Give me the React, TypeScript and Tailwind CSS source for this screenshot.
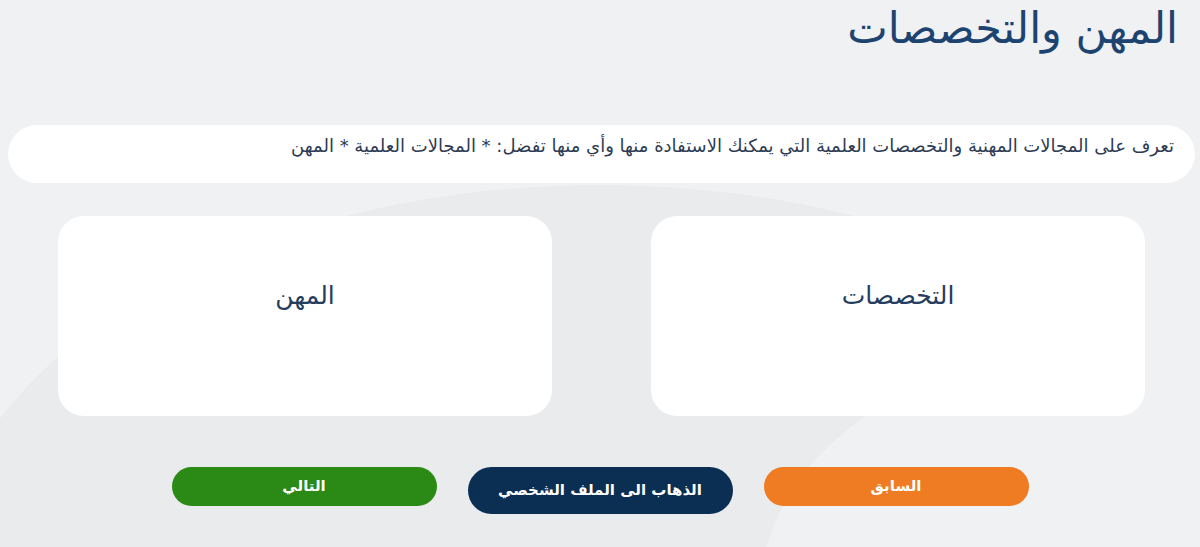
const arabic = "font-['DejaVu_Sans',sans-serif]";

export default function App() {
  return (
    <div
      dir="rtl"
      className={`relative h-[547px] w-[1200px] overflow-hidden bg-[#f0f1f2] ${arabic}`}
    >
      {/* soft background shapes */}
      <div className="pointer-events-none absolute -left-[60px] top-[185px] h-[800px] w-[1320px] rounded-[50%] bg-[#eaebed]" />
      <div className="pointer-events-none absolute left-[760px] top-[345px] h-[500px] w-[700px] rounded-[50%] bg-[#f0f1f2]" />

      <div className="relative flex flex-col">
        <h1 className="pr-[22px] pt-[2px] text-[43px] font-normal leading-[52px] text-[#1d4470]">
          المهن والتخصصات
        </h1>

        <div className="ml-[8px] mr-[5px] mt-[71px] h-[58px] rounded-[29px] bg-white pr-[21px] pt-[8px]">
          <p className="text-[18px] leading-[26px] text-[#2d3b55]">
            تعرف على المجالات المهنية والتخصصات العلمية التي يمكنك الاستفادة منها وأي منها تفضل: * المجالات العلمية * المهن
          </p>
        </div>

        <div className="mt-[33px] flex gap-[99px] px-[55px]">
          <Card label="التخصصات" />
          <Card label="المهن" />
        </div>

        <div className="mt-[51px] flex items-start justify-center gap-[31px]">
          <Button className="h-[39px] bg-[#ef7b22]">السابق</Button>
          <Button className="h-[47px] bg-[#0b2f53]">الذهاب الى الملف الشخصي</Button>
          <Button className="h-[39px] bg-[#2b8a16]">التالي</Button>
        </div>
      </div>
    </div>
  );
}

function Card({ label }: { label: string }) {
  return (
    <div className="flex h-[200px] w-[494px] justify-center rounded-[26px] bg-white pt-[62px]">
      <span className="text-[25px] leading-[36px] text-[#253d5e]">{label}</span>
    </div>
  );
}

function Button({ className, children }: { className: string; children: string }) {
  return (
    <button
      type="button"
      className={`flex w-[265px] items-center justify-center rounded-full text-[15px] font-bold text-white ${className}`}
    >
      {children}
    </button>
  );
}
